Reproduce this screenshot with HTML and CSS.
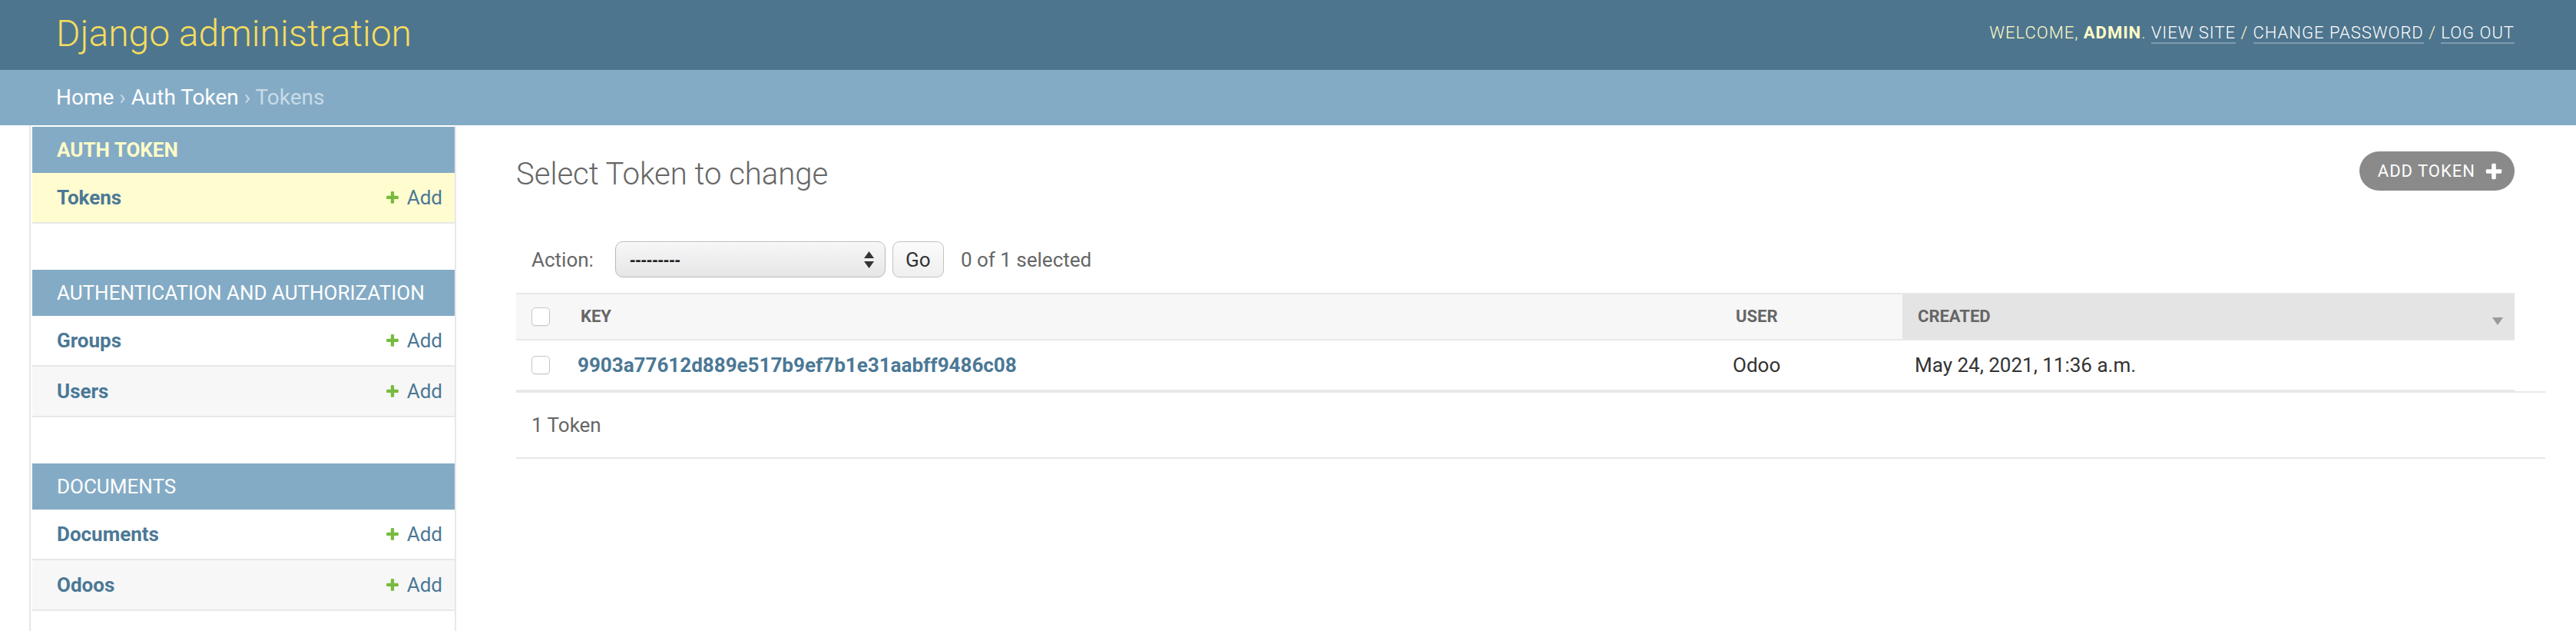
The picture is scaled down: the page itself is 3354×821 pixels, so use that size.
FILE: index.html
```html
<!DOCTYPE html>
<html lang="en">
<head>
<meta charset="utf-8">
<title>Select Token to change | Django site admin</title>
<link rel="stylesheet" href="styles.css">
</head>
<body>
<div class="container">
  <header class="header">
    <h1 class="site-name"><a href="#">Django administration</a></h1>
    <div class="user-tools">Welcome, <strong>admin</strong>. <a href="#">View site</a> / <a href="#">Change password</a> / <a href="#">Log out</a></div>
  </header>
  <div class="breadcrumbs"><a href="#">Home</a> › <a href="#">Auth Token</a> › Tokens</div>
  <div class="main">
    <button class="toggle-nav" aria-label="Toggle navigation"></button>
    <nav class="sidebar">
      <div class="module current-app">
        <div class="module-caption"><a href="#">Auth Token</a></div>
        <div class="module-row current-model">
          <a class="model-link" href="#">Tokens</a>
          <a class="addlink" href="#"><svg class="plus" viewBox="0 0 1792 1792" width="20" height="20"><path d="M1600 796v192q0 40-28 68t-68 28h-416v416q0 40-28 68t-68 28h-192q-40 0-68-28t-28-68v-416h-416q-40 0-68-28t-28-68v-192q0-40 28-68t68-28h416v-416q0-40 28-68t68-28h192q40 0 68 28t28 68v416h416q40 0 68 28t28 68z"/></svg>Add</a>
        </div>
      </div>
      <div class="module">
        <div class="module-caption"><a href="#">Authentication and Authorization</a></div>
        <div class="module-row">
          <a class="model-link" href="#">Groups</a>
          <a class="addlink" href="#"><svg class="plus" viewBox="0 0 1792 1792" width="20" height="20"><path d="M1600 796v192q0 40-28 68t-68 28h-416v416q0 40-28 68t-68 28h-192q-40 0-68-28t-28-68v-416h-416q-40 0-68-28t-28-68v-192q0-40 28-68t68-28h416v-416q0-40 28-68t68-28h192q40 0 68 28t28 68v416h416q40 0 68 28t28 68z"/></svg>Add</a>
        </div>
        <div class="module-row alt">
          <a class="model-link" href="#">Users</a>
          <a class="addlink" href="#"><svg class="plus" viewBox="0 0 1792 1792" width="20" height="20"><path d="M1600 796v192q0 40-28 68t-68 28h-416v416q0 40-28 68t-68 28h-192q-40 0-68-28t-28-68v-416h-416q-40 0-68-28t-28-68v-192q0-40 28-68t68-28h416v-416q0-40 28-68t68-28h192q40 0 68 28t28 68v416h416q40 0 68 28t28 68z"/></svg>Add</a>
        </div>
      </div>
      <div class="module">
        <div class="module-caption"><a href="#">Documents</a></div>
        <div class="module-row">
          <a class="model-link" href="#">Documents</a>
          <a class="addlink" href="#"><svg class="plus" viewBox="0 0 1792 1792" width="20" height="20"><path d="M1600 796v192q0 40-28 68t-68 28h-416v416q0 40-28 68t-68 28h-192q-40 0-68-28t-28-68v-416h-416q-40 0-68-28t-28-68v-192q0-40 28-68t68-28h416v-416q0-40 28-68t68-28h192q40 0 68 28t28 68v416h416q40 0 68 28t28 68z"/></svg>Add</a>
        </div>
        <div class="module-row alt">
          <a class="model-link" href="#">Odoos</a>
          <a class="addlink" href="#"><svg class="plus" viewBox="0 0 1792 1792" width="20" height="20"><path d="M1600 796v192q0 40-28 68t-68 28h-416v416q0 40-28 68t-68 28h-192q-40 0-68-28t-28-68v-416h-416q-40 0-68-28t-28-68v-192q0-40 28-68t68-28h416v-416q0-40 28-68t68-28h192q40 0 68 28t28 68v416h416q40 0 68 28t28 68z"/></svg>Add</a>
        </div>
      </div>
    </nav>
    <div class="content">
      <div class="content-head">
        <h1 class="page-title">Select Token to change</h1>
        <a class="add-button" href="#">Add token<svg class="tool-plus" viewBox="0 0 1792 1792" width="26" height="26"><path d="M1600 796v192q0 40-28 68t-68 28h-416v416q0 40-28 68t-68 28h-192q-40 0-68-28t-28-68v-416h-416q-40 0-68-28t-28-68v-192q0-40 28-68t68-28h416v-416q0-40 28-68t68-28h192q40 0 68 28t28 68v416h416q40 0 68 28t28 68z"/></svg></a>
      </div>
      <div class="actions">
        <span class="action-label">Action:</span>
        <div class="select-box">
          <span class="select-value">---------</span>
          <svg class="select-arrows" viewBox="0 0 13 22" width="13" height="22"><path d="M6.5 0L13 9H0z M0 13H13L6.5 22z"/></svg>
        </div>
        <button class="go-button">Go</button>
        <span class="action-counter">0 of 1 selected</span>
      </div>
      <table class="results">
        <colgroup>
          <col class="col-check">
          <col>
          <col class="col-user">
          <col class="col-created">
        </colgroup>
        <thead>
          <tr>
            <th class="check-col"><input class="cb" type="checkbox"></th>
            <th><span class="th-text">Key</span></th>
            <th><span class="th-text">User</span></th>
            <th class="sorted">
              <div class="sorted-inner">
                <span class="th-text">Created</span>
                <span class="sortoptions"><svg viewBox="0 0 14 10" width="14" height="10"><path d="M0 0H14L7 10z"/></svg></span>
              </div>
            </th>
          </tr>
        </thead>
        <tbody>
          <tr>
            <td class="check-col"><input class="cb" type="checkbox"></td>
            <th class="field-key"><a href="#">9903a77612d889e517b9ef7b1e31aabff9486c08</a></th>
            <td>Odoo</td>
            <td>May 24, 2021, 11:36 a.m.</td>
          </tr>
        </tbody>
      </table>
      <p class="paginator">1 Token</p>
    </div>
  </div>
</div>
</body>
</html>
```
FILE: styles.css
```css
html, body {
  margin: 0;
  padding: 0;
}

body {
  font-family: Roboto, "Lucida Grande", "DejaVu Sans", "Liberation Sans", sans-serif;
  font-size: 26px;
  color: #333;
  background: #fff;
}

a {
  text-decoration: none;
}

/* Header */
.header {
  display: flex;
  justify-content: space-between;
  align-items: flex-start;
  padding: 18px 80px 22px 73px;
  background: #4e758e;
}

.site-name {
  margin: 0;
  font-weight: 300;
  font-size: 48px;
  line-height: 51px;
}

.site-name a {
  color: #f5dd5d;
}

.user-tools {
  margin-top: 12px;
  font-size: 22px;
  line-height: 26px;
  font-weight: 300;
  letter-spacing: 1px;
  text-transform: uppercase;
  color: #fffcc8;
}

.user-tools strong {
  font-weight: 700;
}

.user-tools a {
  color: #fff;
  border-bottom: 2px solid rgba(255, 255, 255, 0.28);
}

/* Breadcrumbs */
.breadcrumbs {
  padding: 20px 80px 20px 73px;
  background: #84abc5;
  font-size: 28px;
  line-height: 32px;
  color: #c8dbe7;
}

.breadcrumbs a {
  color: #fff;
}

/* Main */
.main {
  display: flex;
  min-height: calc(100vh - 163px);
}

.toggle-nav {
  flex: 0 0 38px;
  margin: 0;
  padding: 0;
  border: 0;
  border-right: 2px solid #e6e6e6;
  background: #fff;
  box-sizing: content-box;
}

.sidebar {
  flex: 0 0 550px;
  width: 550px;
  min-width: 0;
  margin-left: 2px;
  border-top: 2px solid transparent;
  border-right: 2px solid #e8e8e8;
}

.module {
  margin-bottom: 60px;
}

.module:last-child {
  margin-bottom: 0;
}

.module-caption {
  padding: 16px 32px;
  background: #84abc5;
  font-size: 26px;
  line-height: 28px;
  letter-spacing: 0;
  white-space: nowrap;
  overflow: hidden;
  text-transform: uppercase;
}

.module-caption a {
  color: #fff;
  font-weight: 400;
}

.current-app .module-caption a {
  color: #fffcc8;
  font-weight: 700;
}

.module-row {
  display: flex;
  justify-content: space-between;
  align-items: center;
  padding: 16px 16px 16px 32px;
  line-height: 32px;
  border-bottom: 2px solid #e8e8e8;
  background: #fff;
}

.module-row.alt {
  background: #f7f7f7;
}

.module-row.current-model {
  background: #fffcd0;
}

.model-link {
  color: #4b7896;
  font-weight: 700;
}

.addlink {
  display: inline-flex;
  align-items: center;
  color: #4b7896;
  font-weight: 400;
}

.plus {
  fill: #77bb3e;
  margin-right: 9px;
}

/* Content */
.content {
  flex: 1 1 auto;
  min-width: 0;
  padding: 40px 80px 40px 78px;
}

.content-head {
  display: flex;
  justify-content: space-between;
  align-items: flex-start;
}

.page-title {
  margin: 0 0 40px;
  font-weight: 300;
  font-size: 40px;
  line-height: 47px;
  color: #666;
}

.add-button {
  display: flex;
  align-items: center;
  margin-top: -6px;
  padding: 6px 14px 6px 24px;
  line-height: 39px;
  font-size: 22px;
  letter-spacing: 1px;
  text-transform: uppercase;
  color: #fff;
  background: #8a8a8a;
  border-radius: 26px;
}

.tool-plus {
  fill: #fff;
  margin-left: 11px;
}

/* Actions */
.actions {
  display: flex;
  align-items: center;
  padding: 24px 20px 20px;
  color: #666;
  font-size: 26px;
}

.select-box {
  display: flex;
  align-items: center;
  justify-content: space-between;
  box-sizing: border-box;
  width: 352px;
  height: 47px;
  margin-left: 28px;
  padding: 0 14px 0 18px;
  border: 1px solid #b8b8b8;
  border-radius: 10px;
  background: linear-gradient(#f7f7f7, #e6e6e6);
  box-shadow: inset 0 1px 0 #fff;
}

.select-value {
  font-family: "Liberation Sans", Arial, sans-serif;
  font-weight: 700;
  font-size: 22px;
  color: #222;
}

.select-arrows {
  fill: #333;
}

.go-button {
  box-sizing: border-box;
  width: 67px;
  height: 47px;
  margin-left: 9px;
  padding: 0;
  border: 1px solid #c2c2c2;
  border-radius: 9px;
  background: linear-gradient(#fbfbfb, #efefef);
  font-family: Roboto, sans-serif;
  font-size: 26px;
  color: #333;
}

.action-counter {
  margin-left: 22px;
}

/* Results table */
.results {
  width: 100%;
  table-layout: fixed;
  border-collapse: separate;
  border-spacing: 0;
}

.col-check {
  width: 64px;
}

.col-user {
  width: 237px;
}

.col-created {
  width: 797px;
}

.results thead th {
  padding: 0;
  background: #f7f7f7;
  border-top: 2px solid #e8e8e8;
  border-bottom: 2px solid #e8e8e8;
  text-align: left;
  vertical-align: middle;
  font-size: 22px;
  line-height: 26px;
  font-weight: 700;
  color: #666;
  text-transform: uppercase;
}

.th-text {
  display: block;
  padding: 16px 20px;
}

.results thead th.sorted {
  background: #e4e4e4;
}

.sorted-inner {
  display: flex;
  justify-content: space-between;
  align-items: flex-start;
}

.sortoptions {
  display: flex;
  padding: 30px 15px 0 0;
  fill: #9a9a9a;
}

.results th.check-col,
.results td.check-col {
  text-align: center;
  padding: 0;
}

.cb {
  appearance: none;
  -webkit-appearance: none;
  display: block;
  box-sizing: border-box;
  width: 24px;
  height: 24px;
  margin: 0 auto;
  border: 1.5px solid #c6c6c6;
  border-radius: 5px;
  background: #fff;
  box-shadow: 0 1px 1px rgba(0, 0, 0, 0.06);
}

.results tbody td,
.results tbody th {
  padding: 16px;
  font-size: 26px;
  line-height: 32px;
  color: #333;
  text-align: left;
  vertical-align: middle;
  border-bottom: 2px solid #e8e8e8;
  background: #fff;
}

.field-key a {
  color: #4b7896;
  font-weight: 700;
}

.paginator {
  width: 100%;
  margin: 0;
  padding: 20px;
  font-size: 26px;
  line-height: 44px;
  color: #666;
  border-top: 2px solid #e8e8e8;
  border-bottom: 2px solid #e8e8e8;
}
```
